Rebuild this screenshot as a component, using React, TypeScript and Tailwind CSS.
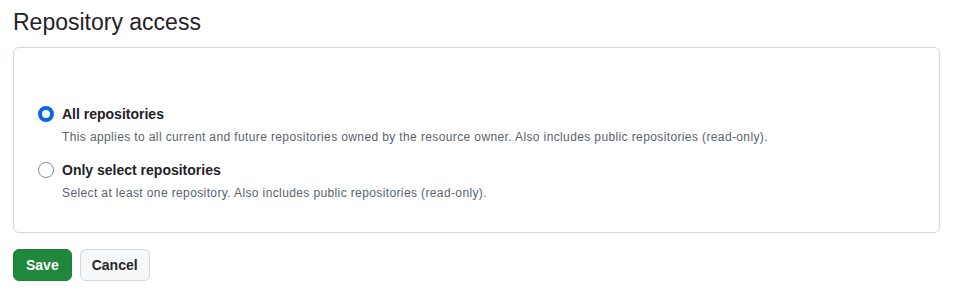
import { useState } from 'react';

const options = [
  {
    id: 'all',
    label: 'All repositories',
    note: 'This applies to all current and future repositories owned by the resource owner. Also includes public repositories (read-only).',
  },
  {
    id: 'select',
    label: 'Only select repositories',
    note: 'Select at least one repository. Also includes public repositories (read-only).',
  },
];

export default function App() {
  const [choice, setChoice] = useState('all');

  return (
    <div className="min-h-screen bg-white pl-[13px] pr-[15px] pt-[6px] font-['Liberation_Sans',Arial,sans-serif] text-[#1f2328]">
      <h2 className="text-[23px] leading-[32px] font-normal">Repository access</h2>

      <div className="mt-[9px] rounded-[6px] border border-[#d1d9e0] px-6 pt-[56px] pb-[29px]">
        <div className="flex flex-col gap-[13px]">
          {options.map((opt) => {
            const active = choice === opt.id;
            return (
              <label key={opt.id} className="flex cursor-pointer items-start gap-2" onClick={() => setChoice(opt.id)}>
                <span
                  className={
                    active
                      ? 'mt-[2px] h-4 w-4 shrink-0 rounded-full border-[4px] border-[#0969da] bg-white'
                      : 'mt-[2px] h-4 w-4 shrink-0 rounded-full border border-[#818b98] bg-white'
                  }
                />
                <span className="flex flex-col">
                  <span className="text-[14px] leading-[20px] font-semibold">{opt.label}</span>
                  <span className="mt-[3px] text-[12px] leading-[20px] tracking-[0.38px] text-[#59636e]">{opt.note}</span>
                </span>
              </label>
            );
          })}
        </div>
      </div>

      <div className="mt-4 flex gap-2">
        <button className="h-8 rounded-[6px] border border-[#1a7f37] bg-[#1f883d] px-3 text-[14px] font-semibold text-white">
          Save
        </button>
        <button className="h-8 rounded-[6px] border border-[#d1d9e0] bg-[#f6f8fa] px-[11px] text-[14px] font-semibold text-[#25292e]">
          Cancel
        </button>
      </div>
    </div>
  );
}
